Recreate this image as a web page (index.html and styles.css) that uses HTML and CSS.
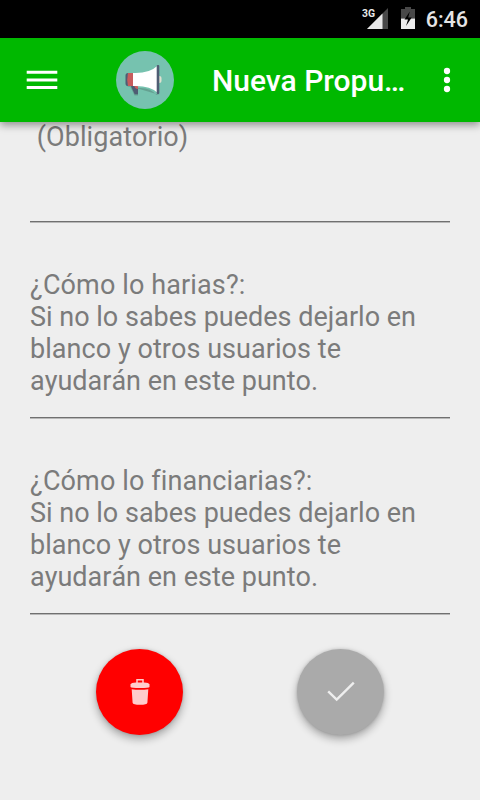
FILE: index.html
```html
<!DOCTYPE html>
<html lang="es">
<head>
<meta charset="utf-8">
<title>Nueva Propuesta</title>
<link rel="stylesheet" href="styles.css">
</head>
<body>
<div class="screen">
  <div class="status">
    <svg class="signal" width="28" height="24" viewBox="-1 -3 28 24">
      <path d="M26 0V21H5Z" fill="#484848"/>
      <path d="M20.500 5.500V21H5Z" fill="#e8e8e8"/>
      <text class="net" x="0" y="9" textLength="13" lengthAdjust="spacingAndGlyphs">3G</text>
    </svg>
    <svg class="battery" width="14" height="22" viewBox="0 0 14 22">
      <path d="M4 0h6v2h4v9.500H0V2h4Z" fill="#484848"/>
      <path d="M0 11.500h14V22H0Z" fill="#ececec"/>
      <path d="M8.800 4.500 3.500 12.500H7L5 19l5.700-8.500H7.200Z" fill="#000"/>
    </svg>
    <span class="clock">6:46</span>
  </div>
  <header class="bar">
    <svg class="menu" width="32" height="20" viewBox="0 0 32 20">
      <path d="M.700 2.200h30.600M.700 9.900h30.600M.700 17.500h30.600" stroke="#fff" stroke-width="3"/>
    </svg>
    <svg class="logo" width="58" height="58" viewBox="0 0 58 58">
      <circle cx="29" cy="29" r="29" fill="#76c2af"/>
      <path d="M10 34q1 2 4.500 2l4 8.500h3.500V37q12-1 18.500 7h3.200" fill="#231f20" opacity=".2"/>
      <path d="M14.500 34h7.500v9.300h-3.300Z" fill="#4f5d73"/>
      <path d="M18 34.500h4v3.500q-2.500.500-4-3.500Z" fill="#c75c5c"/>
      <path d="M42 25h1.500q2 0 2 2v3q0 2-2 2H42Z" fill="#e0e0d1"/>
      <path d="M16 22q17 1 25.500-7.200v27Q34 34 16 35Z" fill="#fff"/>
      <path d="M12 22h5v13h-5q-2.500-6.500 0-13Z" fill="#c75c5c"/>
      <path d="M12 22q-2.500 0-2.500 2.500v8Q9.500 35 12 35q-1.500-6.500 0-13Z" fill="#4f5d73"/>
      <rect x="40.700" y="14" width="2.600" height="29" rx="1" fill="#4f5d73"/>
    </svg>
    <h1 class="title">Nueva Propu…</h1>
    <svg class="more" width="8" height="26" viewBox="0 0 8 26">
      <g fill="#fff"><circle cx="4" cy="4" r="3.150"/><circle cx="4" cy="13" r="3.150"/><circle cx="4" cy="22" r="3.150"/></g>
    </svg>
  </header>
  <main class="form">
    <div class="field first">&nbsp;(Obligatorio)</div>
    <div class="field"><span class="question">¿Cómo lo harias?:</span><br>Si no lo sabes puedes dejarlo en <span class="middle">blanco y otros usuarios te</span> ayudarán en este punto.</div>
    <div class="field"><span class="question">¿Cómo lo financiarias?:</span><br>Si no lo sabes puedes dejarlo en <span class="middle">blanco y otros usuarios te</span> ayudarán en este punto.</div>
    <div class="actions">
      <button class="fab delete" aria-label="Borrar">
        <svg width="20" height="28" viewBox="0 0 20 28">
          <path d="M7 5.200V1.700h6v3.500" fill="none" stroke="#ffcccc" stroke-width="1.500"/>
          <path d="M.500 6.500Q1 4.500 6 4.500h8q5 0 5.500 2V9Q19 10 10 10T.500 9Z" fill="#ffcccc"/>
          <path d="M1.700 11.200q8.300 1.200 16.600 0l-.900 13.500Q17 26.700 10 26.700T2.600 24.700Z" fill="#ffcccc"/>
        </svg>
      </button>
      <button class="fab accept" aria-label="Aceptar">
        <svg width="30" height="24" viewBox="0 0 30 24">
          <path d="M2.200 11.300 10.700 19.600 27.800 2.700" fill="none" stroke="#eee" stroke-width="2.400"/>
        </svg>
      </button>
    </div>
  </main>
</div>
</body>
</html>
```
FILE: styles.css
```css
* { box-sizing: border-box; }
body { margin: 0; font-family: Roboto, "Liberation Sans", sans-serif; }
.screen {
  width: 480px;
  height: 800px;
  overflow: hidden;
  display: flex;
  flex-direction: column;
  background: #eee;
}
.status {
  flex: none;
  height: 38px;
  display: flex;
  align-items: flex-start;
  background: #000;
  padding: 5px 12px 0 0;
  justify-content: flex-end;
}
.signal { margin: 0 12px 0 0; overflow: visible; }
.net { font: 700 11.5px Roboto, sans-serif; fill: #e8e8e8; }
.battery { margin: 2px 11px 0 0; }
.clock {
  margin-top: 2px;
  color: #e4e4e4;
  font-size: 21.5px;
  font-weight: 500;
  line-height: 26px;
}
.bar {
  flex: none;
  height: 84px;
  display: flex;
  align-items: center;
  padding: 0 29px 0 26px;
  background: #00b800;
  box-shadow: 0 3px 8px rgba(0, 0, 0, .4);
  z-index: 1;
}
.logo { margin-left: 58px; }
.title {
  width: 200px;
  margin: 2px auto 0 38px;
  color: #fff;
  font-size: 30px;
  font-weight: 500;
  line-height: 36px;
  white-space: nowrap;
}
.form { padding: 0 30px; }
.field {
  height: 196px;
  padding-top: 47px;
  border-bottom: 1px solid #707070;
  box-shadow: 0 1px #b8b8b8;
  color: #7b7b7b;
  font-size: 27px;
  line-height: 32px;
  font-kerning: none;
}
.question { letter-spacing: .12px; font-variant-ligatures: common-ligatures; }
.middle { letter-spacing: .05px; }
.first {
  height: 100px;
  padding-top: 0;
  line-height: 30px;
  letter-spacing: .06px;
}
.actions {
  display: flex;
  justify-content: space-between;
  padding: 35px 66px 0;
}
.fab {
  width: 87px;
  height: 86px;
  border: 0;
  border-radius: 50%;
  display: flex;
  align-items: center;
  justify-content: center;
  padding: 0;
  box-shadow: 0 4px 8px rgba(0, 0, 0, .32), 0 0 3px rgba(0, 0, 0, .15);
}
.delete { background: #f00; }
.accept { background: #aaa; }
```
